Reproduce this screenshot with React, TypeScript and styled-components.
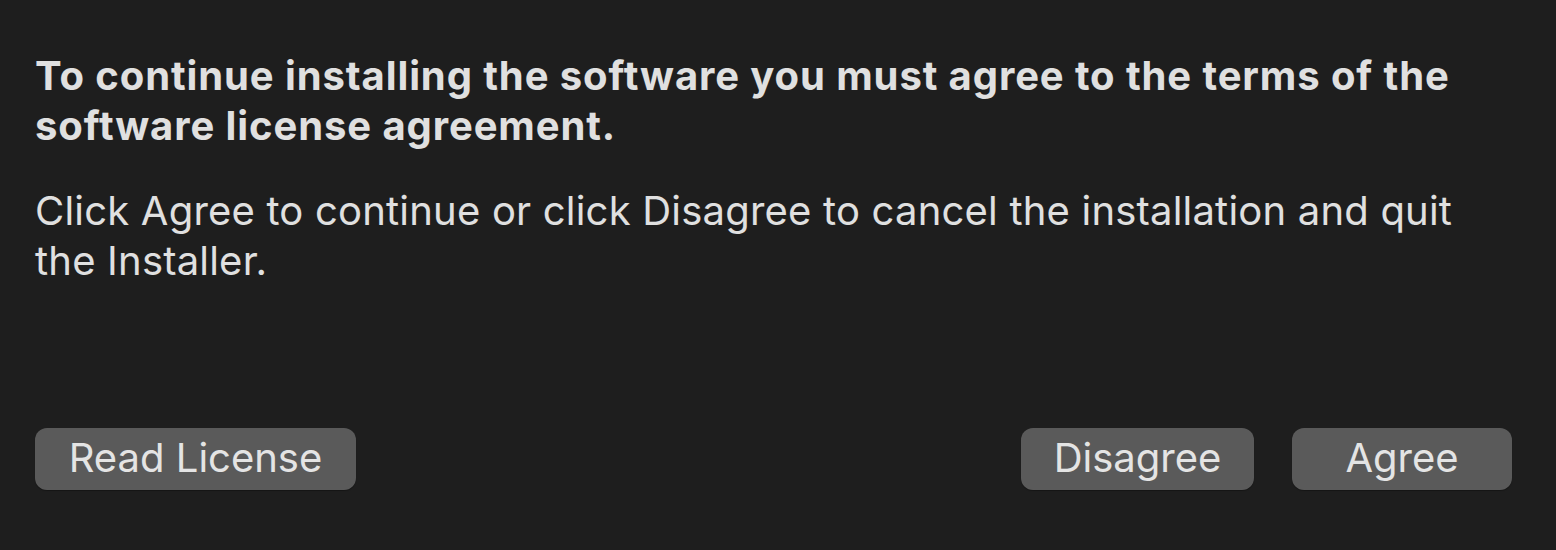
import styled, { createGlobalStyle } from "styled-components";

const GlobalStyle = createGlobalStyle`
  html, body {
    margin: 0;
    padding: 0;
    background: #1e1e1e;
  }
  body {
    font-family: Inter, "Liberation Sans", sans-serif;
    -webkit-font-smoothing: antialiased;
  }
`;

const Panel = styled.div`
  box-sizing: border-box;
  width: 1556px;
  height: 550px;
  padding: 51px 44px 60px 35px;
  background: #1e1e1e;
  color: #e0e0e0;
  display: flex;
  flex-direction: column;
`;

const Heading = styled.p`
  margin: 0;
  font-size: 40px;
  font-weight: 700;
  line-height: 50px;
  letter-spacing: 0.9px;
  white-space: nowrap;
`;

const Body = styled.p`
  margin: 35px 0 0;
  font-size: 40px;
  font-weight: 400;
  line-height: 50px;
  letter-spacing: 0.2px;
  white-space: nowrap;
`;

const Actions = styled.div`
  margin-top: auto;
  display: flex;
  align-items: center;
  gap: 38px;
`;

const Spacer = styled.div`
  flex: 1;
`;

const Button = styled.button<{ $width: number }>`
  box-sizing: border-box;
  width: ${({ $width }) => $width}px;
  height: 62px;
  border: none;
  border-radius: 12px;
  background: #5a5a5a;
  color: #e4e4e4;
  font-family: Inter, "Liberation Sans", sans-serif;
  font-size: 40px;
  font-weight: 400;
  padding: 0 0 3px;
  box-shadow: 0 1px 1px rgba(0, 0, 0, 0.3);
`;

export default function App() {
  return (
    <>
      <GlobalStyle />
      <Panel>
        <Heading>
          To continue installing the software you must agree to the terms of the
          <br />
          software license agreement.
        </Heading>
        <Body>
          Click Agree to continue or click Disagree to cancel the installation and quit
          <br />
          the Installer.
        </Body>
        <Actions>
          <Button $width={321}>Read License</Button>
          <Spacer />
          <Button $width={233}>Disagree</Button>
          <Button $width={220}>Agree</Button>
        </Actions>
      </Panel>
    </>
  );
}
